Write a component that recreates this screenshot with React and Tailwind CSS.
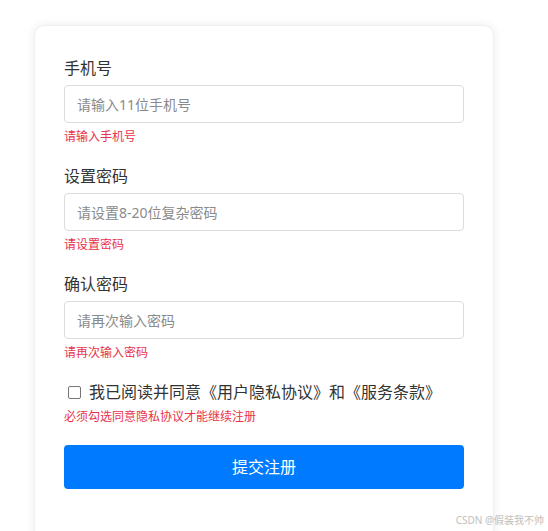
import React from "react";

const font = { fontFamily: '"Noto Sans", "Noto Sans CJK SC", sans-serif' };

function Field({ label, placeholder, error, type = "text" }) {
  return (
    <div className="mb-[18px]">
      <label className="block text-[16px] leading-[24px] text-[#333] mb-[5px]">{label}</label>
      <input
        type={type}
        placeholder={placeholder}
        className="block w-full h-[38px] rounded-[4px] border border-[#dcdcdc] px-[12px] text-[14px] text-[#333] placeholder:text-[#8a8a8a] outline-none bg-white"
      />
      <div className="mt-[5px] text-[12px] leading-[18px] text-[#e8334a]">{error}</div>
    </div>
  );
}

export default function App() {
  return (
    <div className="relative w-[548px] h-[531px] overflow-hidden bg-white" style={font}>
      <div className="ml-[34px] mt-[25px] w-[460px] h-[530px] rounded-[10px] bg-white border border-[#f0f0f0] shadow-[0_0_10px_rgba(0,0,0,0.08)] px-[29px] pt-[30px]">
        <Field label="手机号" placeholder="请输入11位手机号" error="请输入手机号" />
        <Field label="设置密码" placeholder="请设置8-20位复杂密码" error="请设置密码" type="password" />
        <Field label="确认密码" placeholder="请再次输入密码" error="请再次输入密码" type="password" />
        <div className="flex items-center h-[24px] pl-[4px]">
          <span className="w-[13px] h-[13px] rounded-[2px] border border-[#767676] bg-white mr-[8px]" />
          <span className="text-[16px] leading-[24px] text-[#333]">我已阅读并同意《用户隐私协议》和《服务条款》</span>
        </div>
        <div className="mt-[4px] text-[12px] leading-[18px] text-[#e8334a]">必须勾选同意隐私协议才能继续注册</div>
        <button className="mt-[19px] w-full h-[44px] rounded-[4px] bg-[#007bff] text-white text-[16px]">提交注册</button>
      </div>
      <div className="absolute right-[4px] bottom-[4px] text-[10px] leading-[14px] text-[#c0c0c0]">CSDN @假装我不帅</div>
    </div>
  );
}
